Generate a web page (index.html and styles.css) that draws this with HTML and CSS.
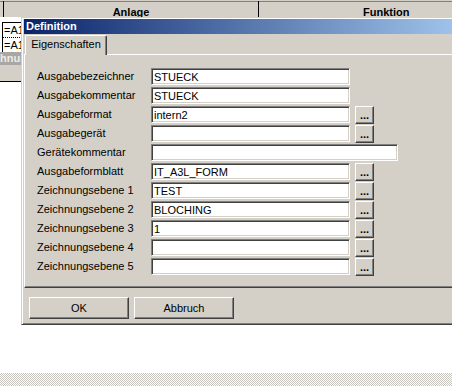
FILE: index.html
```html
<!DOCTYPE html>
<html lang="de">
<head>
    <meta charset="UTF-8">
    <meta name="viewport" content="width=device-width, initial-scale=1.0">
    <title>Definition</title>
    <link rel="stylesheet" href="styles.css">
</head>
<body>
    <div class="backdrop">
        <div class="grid-head">
            <div class="hcell hcell-stub"></div>
            <div class="hcell hcell-wide">Anlage</div>
            <div class="hcell hcell-last">Funktion</div>
        </div>
        <div class="cell cell-first">=A1</div>
        <div class="cell">=A1</div>
        <div class="sheet-bar">hnung</div>
        <div class="sheet-area"></div>
        <div class="dither"></div>
    </div>

    <div class="dialog">
        <div class="titlebar">Definition</div>
        <div class="tabstrip"><div class="tab">Eigenschaften</div></div>
        <div class="tabpanel">
            <div class="form">
                <label for="f1">Ausgabebezeichner</label><input type="text" id="f1" value="STUECK">
                <label for="f2">Ausgabekommentar</label><input type="text" id="f2" value="STUECK">
                <label for="f3">Ausgabeformat</label><input type="text" id="f3" value="intern2"><button class="more">...</button>
                <label for="f4">Ausgabegerät</label><input type="text" id="f4" value=""><button class="more">...</button>
                <label for="f5">Gerätekommentar</label><input type="text" id="f5" class="wide" value="">
                <label for="f6">Ausgabeformblatt</label><input type="text" id="f6" value="IT_A3L_FORM"><button class="more">...</button>
                <label for="f7">Zeichnungsebene 1</label><input type="text" id="f7" value="TEST"><button class="more">...</button>
                <label for="f8">Zeichnungsebene 2</label><input type="text" id="f8" value="BLOCHING"><button class="more">...</button>
                <label for="f9">Zeichnungsebene 3</label><input type="text" id="f9" value="1"><button class="more">...</button>
                <label for="f10">Zeichnungsebene 4</label><input type="text" id="f10" value=""><button class="more">...</button>
                <label for="f11">Zeichnungsebene 5</label><input type="text" id="f11" value=""><button class="more">...</button>
            </div>
        </div>
        <div class="actions">
            <button class="btn">OK</button>
            <button class="btn">Abbruch</button>
        </div>
    </div>
</body>
</html>
```

FILE: styles.css
```css
* { box-sizing: border-box; }
html, body { margin: 0; }
body { width: 452px; height: 386px; overflow: hidden; position: relative; background: #fff; font-family: "Liberation Sans", Arial, sans-serif; font-size: 11px; color: #000; }

/* window behind the dialog */
.backdrop { display: flex; flex-direction: column; height: 386px; }
.grid-head { display: flex; height: 18px; background: #d4d0c8; border-top: 1px solid #d4d0c8; border-bottom: 1px solid #fff; box-shadow: inset 0 1px #808080; }
.hcell { flex: none; height: 16px; border-right: 1px solid #000; padding-top: 5px; line-height: 13px; font-weight: bold; text-align: center; white-space: nowrap; }
.hcell-stub { width: 4px; }
.hcell-wide { width: 255px; }
.hcell-last { flex: 1; border-right: none; padding-left: 104px; text-align: left; overflow: hidden; }
.cell { width: 40px; height: 15px; margin-left: 2px; padding-left: 1px; border-left: 1px solid #000; border-top: 1px dotted #000; line-height: 14px; white-space: nowrap; }
.cell-first { margin-top: 4px; border-top: 1px solid #000; }
.sheet-bar { height: 13px; background: #a9a7a3; color: #ecebe8; font-weight: bold; line-height: 13px; }
.sheet-area { height: 17px; background: #d4d0c8; border-bottom: 1px solid #000; }
.dither { margin-top: auto; height: 13px; background: repeating-conic-gradient(#c9c6c0 0 25%, #fff 0 50%) 0 0 / 2px 2px; }

/* dialog, cut off at the right edge of the screen */
.dialog { position: absolute; left: 21px; top: 17px; width: 431px; height: 308px; padding: 1px 0 2px 2px; background: #d4d0c8; border: 1px solid; border-right: none; border-color: #d4d0c8 #404040 #404040 #d4d0c8; box-shadow: inset 1px 1px #fff, inset 0 -1px #808080; }
.titlebar { height: 15px; padding-left: 2px; background: linear-gradient(to right, #0a246a, #9ec2ea); color: #fff; font-weight: bold; line-height: 15px; }
.tabstrip { display: flex; height: 19px; margin-top: 1px; padding-left: 1px; }
.tab { position: relative; z-index: 1; width: 82px; height: 20px; margin-bottom: -1px; padding-top: 2px; background: #d4d0c8; border: 1px solid; border-bottom: none; border-color: #fff #404040 #d4d0c8 #fff; border-radius: 2px 2px 0 0; box-shadow: inset -1px 0 #808080; line-height: 13px; text-align: center; }
.tabpanel { height: 234px; padding: 13px 0 0 12px; border: 1px solid; border-right: none; border-color: #fff #404040 #404040 #fff; box-shadow: inset 0 -1px #808080; }

.form { display: grid; grid-template-columns: 114px 204px 19px; grid-auto-rows: 17px; row-gap: 2px; }
.form label { grid-column: 1; line-height: 17px; white-space: nowrap; }
.form input { grid-column: 2; width: 199px; height: 17px; margin: 0; padding: 0 2px; background: #fff; border: 1px solid; border-color: #808080 #fff #fff #808080; box-shadow: inset 1px 1px #404040, inset -1px -1px #d4d0c8; font: 11px "Liberation Sans", Arial, sans-serif; color: #000; outline: none; }
.form input.wide { grid-column: 2 / span 2; width: 247px; }
.more { grid-column: 3; width: 19px; height: 18px; margin: 0; padding: 0; background: #d4d0c8; border: 1px solid; border-color: #fff #404040 #404040 #fff; box-shadow: inset -1px -1px #808080, inset 1px 1px #d4d0c8; font: bold 11px "Liberation Sans", Arial, sans-serif; line-height: 12px; color: #000; }

.actions { display: flex; gap: 5px; margin-top: 9px; padding-left: 5px; }
.btn { width: 100px; height: 22px; margin: 0; padding: 0; background: #d4d0c8; border: 1px solid; border-color: #fff #404040 #404040 #fff; box-shadow: inset -1px -1px #808080, inset 1px 1px #d4d0c8; font: 11px "Liberation Sans", Arial, sans-serif; color: #000; }
```
